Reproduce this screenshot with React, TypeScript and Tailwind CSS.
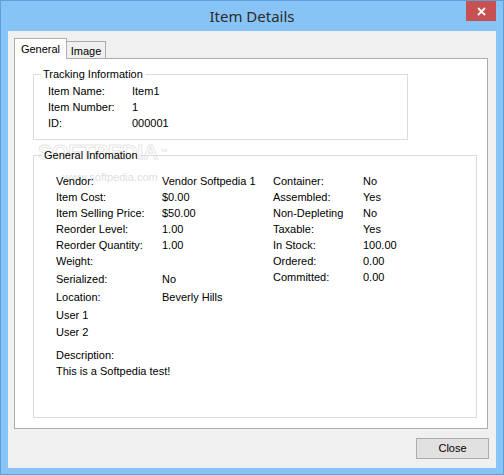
import React from "react";

type Row = { label: string; value?: string; h: string };

const tracking: Row[] = [
  { label: "Item Name:", value: "Item1", h: "h-[17px]" },
  { label: "Item Number:", value: "1", h: "h-[15px]" },
  { label: "ID:", value: "000001", h: "h-[16px]" },
];

const leftRows: Row[] = [
  { label: "Vendor:", value: "Vendor Softpedia 1", h: "h-[16px]" },
  { label: "Item Cost:", value: "$0.00", h: "h-[16px]" },
  { label: "Item Selling Price:", value: "$50.00", h: "h-[17px]" },
  { label: "Reorder Level:", value: "1.00", h: "h-[15px]" },
  { label: "Reorder Quantity:", value: "1.00", h: "h-[16px]" },
  { label: "Weight:", value: "", h: "h-[17px]" },
  { label: "Serialized:", value: "No", h: "h-[18px]" },
  { label: "Location:", value: "Beverly Hills", h: "h-[18px]" },
  { label: "User 1", value: "", h: "h-[18px]" },
  { label: "User 2", value: "", h: "h-[16px]" },
];

const rightRows: Row[] = [
  { label: "Container:", value: "No", h: "h-[16px]" },
  { label: "Assembled:", value: "Yes", h: "h-[16px]" },
  { label: "Non-Depleting", value: "No", h: "h-[16px]" },
  { label: "Taxable:", value: "Yes", h: "h-[16px]" },
  { label: "In Stock:", value: "100.00", h: "h-[16px]" },
  { label: "Ordered:", value: "0.00", h: "h-[16px]" },
  { label: "Committed:", value: "0.00", h: "h-[16px]" },
];

function Field({ row, labelW }: { row: Row; labelW: string }) {
  return (
    <div className={`flex items-center ${row.h}`}>
      <span className={`${labelW} shrink-0`}>{row.label}</span>
      <span>{row.value}</span>
    </div>
  );
}

export default function App() {
  return (
    <div className="w-[504px] h-[475px] bg-[#88c3f6] border border-[#5f9fd9] flex flex-col text-[11px] leading-[13px] text-black font-['Liberation_Sans',Arial,sans-serif]">
      {/* title bar */}
      <div className="relative h-[30px] flex items-center justify-center">
        <span className="text-[15px] text-[#2b2b2b] font-['Noto_Sans','Open_Sans',sans-serif] pt-[1px]">
          Item Details
        </span>
        <div className="absolute right-[7px] top-0 w-[30px] h-[20px] bg-[#c75050] flex items-center justify-center">
          <svg width="9" height="9" viewBox="0 0 9 9">
            <path d="M1 1L8 8M8 1L1 8" stroke="#fff" strokeWidth="1.8" />
          </svg>
        </div>
      </div>

      {/* client area */}
      <div className="mx-[7px] mb-[6px] flex-1 bg-[#f0f0f0] flex flex-col pl-[6px] pr-[8px] pt-[7px]">
        <div className="flex items-end">
          <div className="relative z-10 -mb-px h-[21px] w-[53px] bg-white border border-b-0 border-[#acacac] flex items-center justify-center">
            General
          </div>
          <div className="-mb-px h-[18px] w-[39px] bg-[#f0f0f0] border border-l-0 border-b-0 border-[#acacac] flex items-center justify-center pt-[1px]">
            Image
          </div>
        </div>

        <div className="relative h-[371px] bg-white border border-[#acacac] pl-[18px] pt-[9px]">
          {/* watermark */}
          <div className="absolute left-[23px] top-[82px] text-[21px] leading-[22px] font-bold text-white [-webkit-text-stroke:1px_#e6e6e6] pointer-events-none">
            SOFTPEDIA
            <span className="ml-[2px] text-[7px] align-top font-normal [-webkit-text-stroke:0px] text-[#e2e2e2]">™</span>
          </div>
          <div className="absolute left-[48px] top-[112px] text-[11px] text-[#e0e0e0] pointer-events-none">
            www.softpedia.com
          </div>

          <fieldset className="relative w-[375px] border border-[#dcdcdc] pl-[14px] pb-[8px]">
            <legend className="ml-[-7px] px-[2px] leading-[13px]">Tracking Information</legend>
            <div className="pt-[2px]">
              {tracking.map((r) => (
                <Field key={r.label} row={r} labelW="w-[84px]" />
              ))}
            </div>
          </fieldset>

          <fieldset className="relative mt-[9px] w-[444px] h-[269px] border border-[#dcdcdc] pl-[22px]">
            <legend className="ml-[-14px] px-[2px] leading-[13px]">General Infomation</legend>
            <div className="flex pt-[11px]">
              <div className="w-[217px]">
                {leftRows.map((r) => (
                  <Field key={r.label} row={r} labelW="w-[106px]" />
                ))}
              </div>
              <div>
                {rightRows.map((r) => (
                  <Field key={r.label} row={r} labelW="w-[90px]" />
                ))}
              </div>
            </div>
            <div className="mt-[8px] h-[15px] flex items-center">Description:</div>
            <div className="h-[16px] flex items-center">This is a Softpedia test!</div>
          </fieldset>
        </div>

        <div className="flex justify-end pt-[9px] mr-[-1px]">
          <button className="w-[73px] h-[21px] bg-[#e1e1e1] border border-[#adadad] flex items-center justify-center">
            Close
          </button>
        </div>
      </div>
    </div>
  );
}
